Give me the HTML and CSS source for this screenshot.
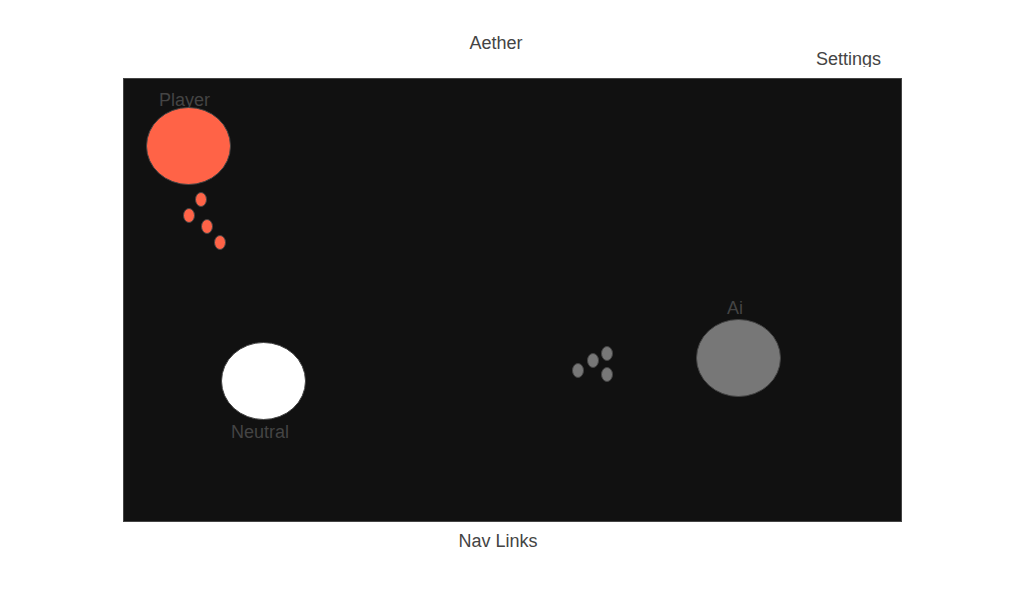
FILE: index.html
```
<!DOCTYPE html>
<html lang="en">
<head>
<meta charset="utf-8">
<title>Aether</title>
<link rel="stylesheet" href="styles.css">
</head>
<body>
<header class="header">
  <h1 class="title">Aether</h1>
  <div class="settings">Settings</div>
</header>
<main class="main">
  <svg class="board" viewBox="0 0 779 444" role="img" aria-label="Game board">
    <rect class="space" x="0.5" y="0.5" width="778" height="443"/>
    <g class="labels">
      <text x="36" y="28">Player</text>
      <text x="108" y="360">Neutral</text>
      <text x="604" y="236">Ai</text>
    </g>
    <g class="player">
      <ellipse cx="65.5" cy="68" rx="42" ry="38.5"/>
      <ellipse cx="78" cy="121.5" rx="5.5" ry="7"/>
      <ellipse cx="66" cy="137.5" rx="5.5" ry="7"/>
      <ellipse cx="84" cy="148.5" rx="5.5" ry="7"/>
      <ellipse cx="97" cy="164.5" rx="5.5" ry="7"/>
    </g>
    <g class="neutral">
      <ellipse cx="140.5" cy="303" rx="42" ry="38.5"/>
    </g>
    <g class="ai">
      <ellipse cx="615.5" cy="280" rx="42" ry="38.5"/>
      <ellipse cx="455" cy="292.5" rx="5.5" ry="7"/>
      <ellipse cx="470" cy="282.5" rx="5.5" ry="7"/>
      <ellipse cx="484" cy="275.5" rx="5.5" ry="7"/>
      <ellipse cx="484" cy="296.5" rx="5.5" ry="7"/>
    </g>
  </svg>
</main>
<footer class="footer">Nav Links</footer>
</body>
</html>
```
FILE: styles.css
```
body {
  margin: 0;
  background: #fff;
  color: #444;
  font: 18px/20px "Liberation Sans", Arial, sans-serif;
}

.header {
  padding: 35px 0 11px;
  line-height: 16px;
}

.title {
  margin: 0;
  padding-right: 32px;
  font: inherit;
  text-align: center;
}

.settings {
  padding-right: 143px;
  overflow: hidden;
  text-align: right;
}

.main {
  padding: 0 122px 0 123px;
}

.board {
  display: block;
  width: 100%;
  stroke: #444;
  stroke-width: 1px;
}

.space {
  fill: #111;
}

.labels {
  fill: #444;
  stroke: none;
}

.player {
  fill: #ff6347;
}

.neutral {
  fill: #fff;
}

.ai {
  fill: #777;
}

.footer {
  padding: 9px 28px 9px 0;
  text-align: center;
}
```
